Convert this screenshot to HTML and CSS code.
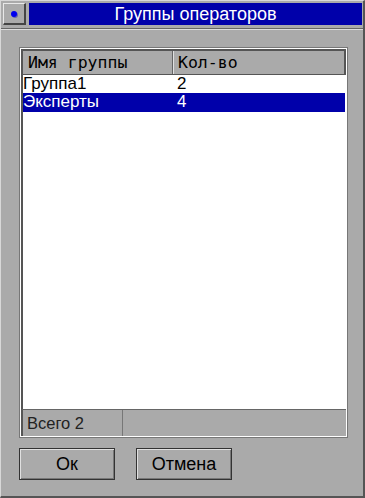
FILE: index.html
```html
<!DOCTYPE html>
<html lang="ru">
<head>
    <meta charset="UTF-8">
    <title>Группы операторов</title>
<link rel="stylesheet" href="styles.css">
</head>
<body>
    <div class="okno">
        <div class="zagolovok">
            <div class="sys-knopka"><span class="tochka"></span></div>
            <div class="nazvanie">Группы операторов</div>
        </div>

        <div class="soderzhimoe">
            <div class="spisok">
                <div class="shapka">
                    <div class="kol1">Имя группы</div>
                    <div class="kol2">Кол-во</div>
                </div>
                <div class="stroki">
                    <div class="stroka">
                        <div class="kol1">Группа1</div>
                        <div class="kol2">2</div>
                    </div>
                    <div class="stroka vybrana">
                        <div class="kol1">Эксперты</div>
                        <div class="kol2">4</div>
                    </div>
                </div>
                <div class="status">
                    <div class="status-yacheika">Всего 2</div>
                    <div class="status-pusto"></div>
                </div>
            </div>

            <div class="knopki">
                <button class="knopka">Ок</button>
                <button class="knopka">Отмена</button>
            </div>
        </div>
    </div>
</body>
</html>
```

FILE: styles.css
```css
body {
    margin: 0;
    background: #aaaaaa;
    font-family: "Liberation Sans", Arial, sans-serif;
}

.okno {
    width: 365px;
    height: 498px;
    box-sizing: border-box;
    background: #aaaaaa;
    border-top: 1px solid #d8d8d8;
    border-left: 1px solid #d8d8d8;
    border-right: 2px solid #555555;
    border-bottom: 2px solid #555555;
}

.zagolovok {
    display: flex;
    gap: 3px;
    padding: 2px 1px 0 2px;
    height: 25px;
    border-bottom: 1px solid #666666;
    box-shadow: 0 1px 0 #dcdcdc;
}

.sys-knopka {
    width: 20px;
    height: 19px;
    border-top: 1px solid #e8e8e8;
    border-left: 1px solid #e8e8e8;
    border-right: 2px solid #444444;
    border-bottom: 2px solid #444444;
    background: #aaaaaa;
    display: flex;
    align-items: center;
    justify-content: center;
}

.tochka {
    width: 6px;
    height: 6px;
    border-radius: 50%;
    background: #0000ee;
    box-shadow: 1px 1px 0 #6a6aa8;
}

.nazvanie {
    flex: 1;
    height: 22px;
    background: #0000aa;
    color: #ffffff;
    font-size: 18px;
    line-height: 22px;
    text-align: center;
}

.soderzhimoe {
    padding: 18px 0 0 18px;
}

.spisok {
    width: 329px;
    height: 391px;
    box-sizing: border-box;
    border: 1px solid #777777;
    box-shadow: inset 1px 1px 0 #ffffff, inset -1px -1px 0 #ffffff;
    padding: 1px;
    display: flex;
    flex-direction: column;
}

.shapka,
.stroka {
    display: grid;
    grid-template-columns: 150px 1fr;
}

.shapka {
    height: 26px;
    box-sizing: border-box;
    border: 2px solid #555555;
    border-bottom-width: 1px;
    background: #aaaaaa;
    font-family: "DejaVu Sans Mono", monospace;
    font-size: 16.5px;
    line-height: 23px;
    color: #000000;
}

.shapka .kol1 {
    padding-left: 5px;
    border-right: 1px solid #666666;
    box-shadow: 1px 0 0 #e0e0e0;
}

.shapka .kol2 {
    padding-left: 5px;
}

.stroki {
    flex: 1;
    background: #ffffff;
    border-left: 2px solid #555555;
    border-right: 1px solid #ffffff;
}

.stroka {
    height: 18px;
    font-size: 17px;
    line-height: 18px;
    color: #000000;
}

.stroka .kol2 {
    padding-left: 4px;
}

.stroka.vybrana {
    height: 19px;
    background: #0000aa;
    color: #ffffff;
}

.status {
    display: flex;
    height: 26px;
    border-top: 1px solid #666666;
    border-left: 2px solid #555555;
    background: #aaaaaa;
    font-size: 16.5px;
    line-height: 26px;
    color: #222222;
}

.status-yacheika {
    width: 95px;
    padding-left: 4px;
    border-right: 1px solid #777777;
}

.status-pusto {
    flex: 1;
}

.knopki {
    display: flex;
    gap: 21px;
    margin-top: 10px;
}

.knopka {
    width: 96px;
    height: 32px;
    box-sizing: border-box;
    background: #aaaaaa;
    border: 1px solid #333333;
    box-shadow: inset 1px 1px 0 #e0e0e0, inset -1px -1px 0 #777777;
    font-family: "Liberation Sans", Arial, sans-serif;
    font-size: 18px;
    color: #000000;
    padding: 0;
}
```
